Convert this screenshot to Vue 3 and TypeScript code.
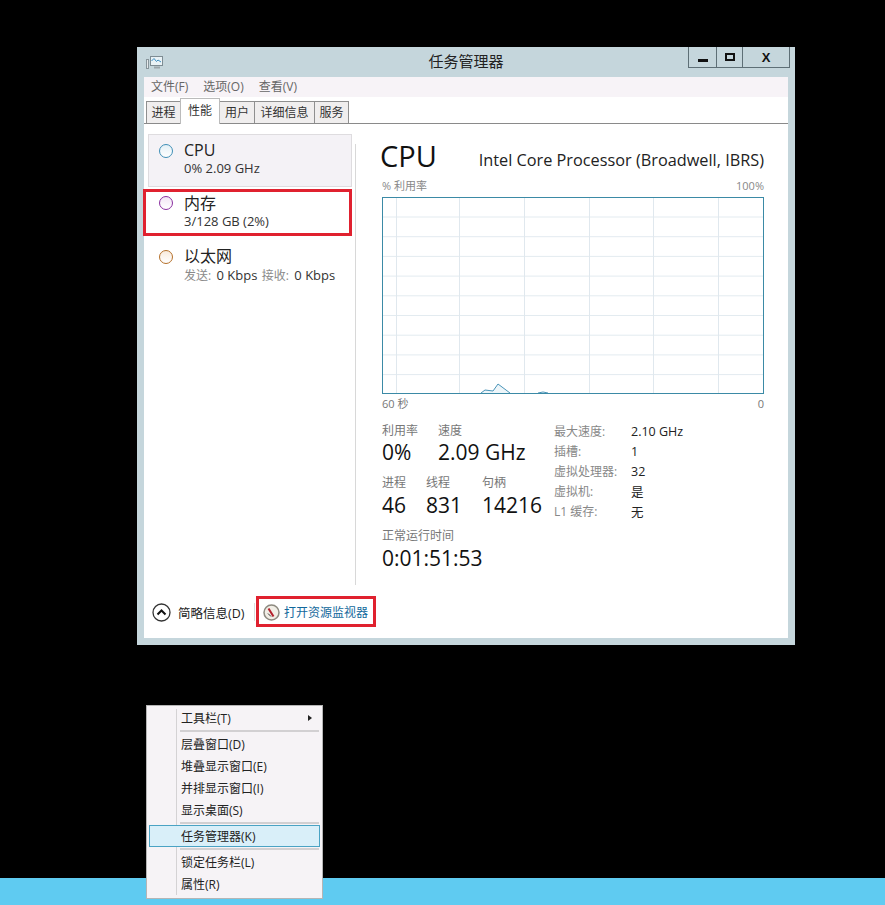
<script setup lang="ts">
const tabs = [
  { label: '进程', active: false },
  { label: '性能', active: true },
  { label: '用户', active: false },
  { label: '详细信息', active: false },
  { label: '服务', active: false },
]
const hLines = Array.from({ length: 9 }, (_, i) => 20 + i * 19.7)
const vLines = [14, 77, 142, 207, 271, 336]
const specs = [
  ['最大速度:', '2.10 GHz'],
  ['插槽:', '1'],
  ['虚拟处理器:', '32'],
  ['虚拟机:', '是'],
  ['L1 缓存:', '无'],
]
</script>

<template>
  <div class="screen">
    <div class="window">
      <header class="titlebar">
        <svg class="app-icon" width="17" height="14" viewBox="0 0 17 14">
          <rect x="0.500" y="3.500" width="2" height="9" fill="#e6eaec" stroke="#87949a" />
          <rect x="4.500" y="0.500" width="12" height="9" fill="#e9f2f6" stroke="#7e8c93" />
          <path d="M5.500 5l2.500-2.500 2.500 3 1.500-1.500 3 2" fill="none" stroke="#3d8fc2" />
          <path d="M8 11.500h6" stroke="#9aa5aa" stroke-width="2" />
        </svg>
        <div class="title">任务管理器</div>
        <div class="controls">
          <div class="ctl ctl-min"><span class="min-glyph"></span></div>
          <div class="ctl ctl-max"><span class="max-glyph"></span></div>
          <div class="ctl ctl-close">X</div>
        </div>
      </header>
      <div class="client">
        <nav class="menubar">
          <span>文件(F)</span><span>选项(O)</span><span>查看(V)</span>
        </nav>
        <div class="tabs">
          <div v-for="t in tabs" :key="t.label" class="tab" :class="{ active: t.active }">{{ t.label }}</div>
        </div>
        <div class="body">
          <aside class="side">
            <div class="item selected">
              <span class="dot dot-cpu"></span>
              <div>
                <div class="item-name">CPU</div>
                <div class="item-sub">0% 2.09 GHz</div>
              </div>
            </div>
            <div class="item boxed">
              <span class="dot dot-mem"></span>
              <div>
                <div class="item-name">内存</div>
                <div class="item-sub">3/128 GB (2%)</div>
              </div>
            </div>
            <div class="item plain">
              <span class="dot dot-net"></span>
              <div>
                <div class="item-name">以太网</div>
                <div class="item-sub"><span class="light">发送:</span> 0 Kbps <span class="light second">接收:</span> 0 Kbps</div>
              </div>
            </div>
          </aside>
          <main class="detail">
            <div class="head">
              <div class="big">CPU</div>
              <div class="model">Intel Core Processor (Broadwell, IBRS)</div>
            </div>
            <div class="axis top"><span>% 利用率</span><span>100%</span></div>
            <svg class="graph" width="382" height="197" viewBox="0 0 382 197">
              <line v-for="y in hLines" :key="y" x1="0" x2="382" :y1="y" :y2="y" stroke="#e3ebf0" />
              <line v-for="x in vLines" :key="x" :x1="x + 0.5" :x2="x + 0.5" y1="0" y2="197" stroke="#e0e8ee" />
              <path d="M99 196L103 193 111 194 116 187 128 196" fill="#eef6fa" stroke="#4a94b8" />
              <path d="M156 196L161 195 166 196" fill="none" stroke="#4a94b8" />
              <rect x="0.500" y="0.500" width="381" height="196" fill="none" stroke="#3b8aa6" />
            </svg>
            <div class="axis bottom"><span>60 秒</span><span>0</span></div>
            <div class="stats">
              <div class="stat-left">
                <div class="stat-row">
                  <div class="stat w56"><div class="lab">利用率</div><div class="val">0%</div></div>
                  <div class="stat"><div class="lab">速度</div><div class="val">2.09 GHz</div></div>
                </div>
                <div class="stat-row lower">
                  <div class="stat w44"><div class="lab">进程</div><div class="val">46</div></div>
                  <div class="stat w56"><div class="lab">线程</div><div class="val">831</div></div>
                  <div class="stat"><div class="lab">句柄</div><div class="val">14216</div></div>
                </div>
                <div class="stat-row lower">
                  <div class="stat"><div class="lab">正常运行时间</div><div class="val">0:01:51:53</div></div>
                </div>
              </div>
              <div class="specs">
                <div v-for="s in specs" :key="s[0]" class="spec">
                  <span class="spec-k">{{ s[0] }}</span><span class="spec-v">{{ s[1] }}</span>
                </div>
              </div>
            </div>
          </main>
        </div>
        <footer class="foot">
          <span class="chev">
            <svg width="19" height="19" viewBox="0 0 19 19">
              <circle cx="9.500" cy="9.500" r="8.500" fill="#fff" stroke="#333" stroke-width="1.300" />
              <path d="M5.500 11.500L9.500 7.500l4 4" fill="none" stroke="#111" stroke-width="2" />
            </svg>
          </span>
          <span class="brief">简略信息(D)</span>
          <span class="foot-sep"></span>
          <div class="monitor">
            <svg width="17" height="17" viewBox="0 0 17 17">
              <circle cx="8.500" cy="8.500" r="7.500" fill="#f1eee6" stroke="#8d8a80" stroke-width="1.500" />
              <path d="M5.500 4.500l5 8" stroke="#b3202c" stroke-width="2" />
              <path d="M5 9.500l3 3" stroke="#333" />
            </svg>
            <span class="link">打开资源监视器</span>
          </div>
        </footer>
      </div>
    </div>
    <div class="taskbar"></div>
    <div class="ctx">
      <div class="ctx-row"><span>工具栏(T)</span><i class="arrow"></i></div>
      <div class="ctx-sep"></div>
      <div class="ctx-row">层叠窗口(D)</div>
      <div class="ctx-row">堆叠显示窗口(E)</div>
      <div class="ctx-row">并排显示窗口(I)</div>
      <div class="ctx-row">显示桌面(S)</div>
      <div class="ctx-sep"></div>
      <div class="ctx-row hot">任务管理器(K)</div>
      <div class="ctx-sep"></div>
      <div class="ctx-row">锁定任务栏(L)</div>
      <div class="ctx-row">属性(R)</div>
    </div>
  </div>
</template>

<style scoped>
.screen {
  position: relative;
  width: 885px;
  height: 905px;
  background: #000;
  overflow: hidden;
  padding: 47px 0 0 137px;
  box-sizing: border-box;
  font-family: "Open Sans", "Noto Sans CJK SC", sans-serif;
  color: #111;
}
.window {
  width: 658px;
  height: 598px;
  box-sizing: border-box;
  background: #c5d6dc;
  padding: 0 7px 7px;
  display: flex;
  flex-direction: column;
}
.titlebar {
  height: 30px;
  flex: none;
  position: relative;
  display: flex;
  align-items: center;
  justify-content: center;
}
.app-icon {
  position: absolute;
  left: 2px;
  top: 9px;
}
.title {
  font-size: 15px;
  color: #222;
  margin-top: -3px;
}
.controls {
  position: absolute;
  right: -2px;
  top: 0;
  display: flex;
  height: 21px;
  border: 1px solid #5e6f76;
  border-top: 0;
  box-sizing: border-box;
}
.ctl {
  display: flex;
  align-items: center;
  justify-content: center;
  border-right: 1px solid #5e6f76;
}
.ctl-min { width: 27px; }
.ctl-max { width: 25px; }
.ctl-close {
  width: 46px;
  border-right: 0;
  font: 700 13px "Liberation Sans", sans-serif;
  color: #111;
}
.min-glyph {
  width: 10px;
  height: 3px;
  background: #111;
  margin-top: 6px;
}
.max-glyph {
  width: 10px;
  height: 8px;
  box-sizing: border-box;
  border: 2px solid #111;
  margin-top: -1px;
}
.client {
  flex: 1;
  background: #fff;
  display: flex;
  flex-direction: column;
  min-height: 0;
}
.menubar {
  height: 20px;
  flex: none;
  background: #f7f3f7;
  display: flex;
  align-items: center;
  gap: 15px;
  padding: 0 0 2px 7px;
  box-sizing: border-box;
  font-size: 12px;
  color: #666;
}
.tabs {
  height: 27px;
  flex: none;
  display: flex;
  align-items: flex-end;
  padding-left: 3px;
  border-bottom: 1px solid #8a8a8a;
  box-sizing: border-box;
}
.tab {
  height: 22px;
  box-sizing: border-box;
  width: 35px;
  text-align: center;
  border: 1px solid #8f8f8f;
  border-bottom: 0;
  margin-left: -1px;
  background: #f0eeee;
  font-size: 12px;
  line-height: 22px;
  color: #333;
}
.tab:nth-child(3) { width: 36px; }
.tab:nth-child(4) { width: 61px; }
.tab.active {
  width: 40px;
  height: 26px;
  background: #fff;
  line-height: 24px;
  margin-bottom: -1px;
  position: relative;
  border-color: #bbb;
}
.body {
  flex: 1;
  display: flex;
  min-height: 0;
}
.side {
  width: 212px;
  flex: none;
  padding: 10px 0 0 4px;
  box-sizing: border-box;
  position: relative;
}
.side::after {
  content: "";
  position: absolute;
  right: 0;
  top: 20px;
  height: 441px;
  width: 1px;
  background: #d8d8d8;
}
.item {
  width: 204px;
  height: 53px;
  box-sizing: border-box;
  display: flex;
  align-items: flex-start;
  gap: 11px;
  padding: 5px 0 0 10px;
}
.item.selected {
  background: #f4f2f6;
  border: 1px solid #dedcdf;
}
.item.boxed {
  width: 209px;
  height: 47px;
  margin: 2px 0 3px -5px;
  border: 3px solid #e0212f;
  padding: 1px 0 0 13px;
}
.item.plain { padding: 7px 0 0 11px; }
.dot {
  width: 14px;
  height: 14px;
  border-radius: 50%;
  margin-top: 4px;
  flex: none;
  box-sizing: border-box;
  border: 1.500px solid;
}
.item.boxed .dot { margin-top: 3px; }
.dot-cpu { border-color: #3f8fb6; background: linear-gradient(#e4f0f6, #fff); }
.dot-mem { border-color: #8a2fa0; background: linear-gradient(#f2e6f5, #fff); }
.dot-net { border-color: #b5702a; background: linear-gradient(#f8ebdd, #fff); }
.item-name {
  font-size: 16px;
  line-height: 20px;
  color: #222;
}
.item-sub {
  font-size: 13px;
  line-height: 16px;
  color: #333;
  white-space: nowrap;
}
.item.plain .item-sub { margin-top: 1px; }
.light {
  color: #8a8a8a;
  font-size: 12px;
  margin-right: 2px;
}
.light.second { margin-left: 1px; }
.detail {
  flex: 1;
  padding: 12px 24px 0 26px;
  min-width: 0;
}
.head {
  display: flex;
  justify-content: space-between;
  align-items: flex-start;
  height: 40px;
}
.big {
  font-size: 29px;
  line-height: 40px;
  color: #111;
  margin-left: -2px;
}
.model {
  font-size: 16.300px;
  line-height: 22px;
  margin-top: 13px;
  color: #222;
  white-space: nowrap;
}
.axis {
  display: flex;
  justify-content: space-between;
  font-size: 11px;
  color: #888;
  line-height: 14px;
  width: 382px;
}
.axis.top { margin-top: 3px; margin-bottom: 4px; }
.axis.bottom { margin-top: 3px; color: #777; }
.graph { display: block; }
.stats {
  display: flex;
  margin-top: 11px;
}
.stat-left {
  width: 172px;
  flex: none;
}
.stat-row {
  display: flex;
  height: 52px;
}
.stat-row.lower { height: 53px; }
.stat-row.lower .val { margin-top: 1px; }
.w56 { width: 56px; }
.w44 { width: 44px; }
.lab {
  font-size: 12px;
  line-height: 17px;
  color: #777;
  white-space: nowrap;
}
.val {
  font-size: 21px;
  line-height: 27px;
  color: #111;
  white-space: nowrap;
}
.specs { margin-top: -1px; }
.spec {
  display: flex;
  height: 20px;
  align-items: center;
  font-size: 12px;
}
.spec-k {
  width: 77px;
  color: #888;
}
.spec-v {
  color: #222;
  font-size: 12.500px;
}
.foot {
  flex: none;
  height: 48px;
  box-sizing: border-box;
  display: flex;
  align-items: center;
  padding: 0 0 4px 8px;
}
.chev {
  display: flex;
  width: 19px;
  height: 19px;
  margin-right: 7px;
}
.brief {
  font-size: 12.500px;
  color: #222;
  width: 76px;
  white-space: nowrap;
}
.foot-sep {
  width: 1px;
  height: 18px;
  background: #ddd;
  margin-right: 1px;
}
.monitor {
  width: 120px;
  height: 31px;
  margin-top: -1px;
  box-sizing: border-box;
  border: 3px solid #e0212f;
  display: flex;
  align-items: center;
  gap: 4px;
  padding: 1px 0 0 4px;
}
.link {
  font-size: 12px;
  color: #12689c;
  white-space: nowrap;
}
.taskbar {
  position: absolute;
  left: 0;
  right: 0;
  bottom: 0;
  height: 27px;
  background: #5fcbf1;
}
.ctx {
  position: absolute;
  left: 146px;
  top: 705px;
  width: 177px;
  height: 194px;
  box-sizing: border-box;
  background: #f6f3f6;
  border: 1px solid #b5b5b5;
  padding: 1px 2px;
  font-size: 12px;
  color: #222;
}
.ctx::before {
  content: "";
  position: absolute;
  left: 29px;
  top: 3px;
  bottom: 3px;
  width: 1px;
  background: #d4d2d4;
}
.ctx-row {
  height: 22px;
  line-height: 21px;
  padding-left: 32px;
  display: flex;
  align-items: center;
  justify-content: space-between;
  box-sizing: border-box;
  position: relative;
}
.ctx-sep {
  height: 2px;
  margin: 1px 1px 1px 31px;
  background: #d2d0d2;
  position: relative;
}
.hot {
  background: #d9eff9;
  border: 1px solid #4aa3c4;
  padding-left: 31px;
}
.arrow {
  width: 0;
  height: 0;
  border-left: 4px solid #222;
  border-top: 3.500px solid transparent;
  border-bottom: 3.500px solid transparent;
  margin-right: 8px;
}
</style>
